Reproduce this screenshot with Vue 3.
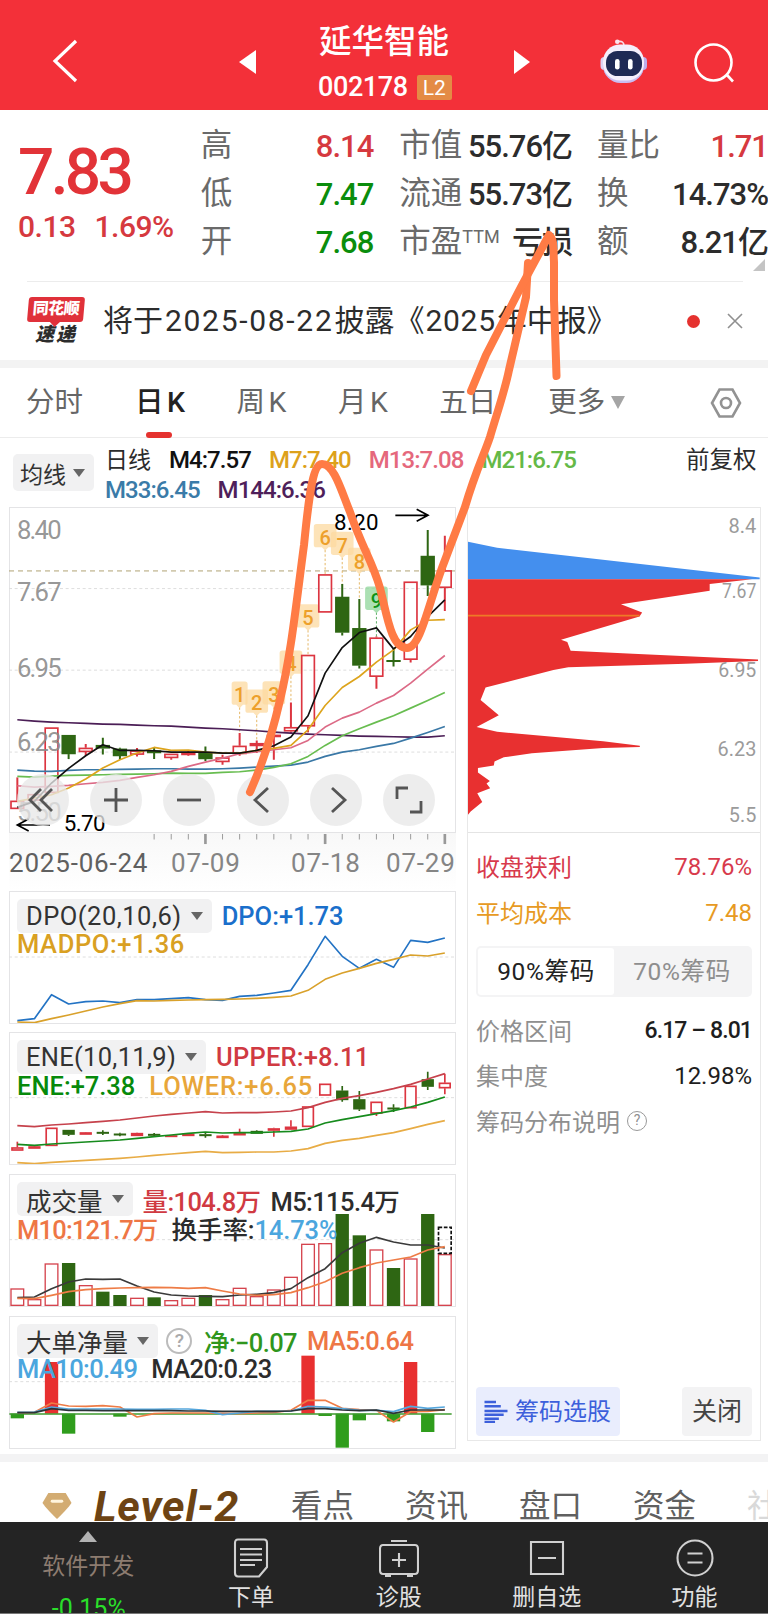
<template>
    <div class="page">
        <header class="header">
            <svg class="back" viewBox="0 0 28 44"><path d="M25 2 L4 22 L25 42" /></svg>
            <svg class="tri" viewBox="0 0 17 24"><path d="M17 0 V24 L0 12Z" /></svg>
            <div class="title">
                <h1>延华智能</h1>
                <div class="code">002178<span class="l2">L2</span></div>
            </div>
            <svg class="tri tri-right" viewBox="0 0 17 24"><path d="M0 0 V24 L16 12Z" /></svg>
            <svg class="robot" viewBox="0 0 48 46">
                <path d="M18 3.500 Q24 2.500 24 8" fill="none" stroke="#f9d9e6" stroke-width="1.600" />
                <circle cx="17.300" cy="3.700" r="2.300" fill="#fbe4ee" />
                <rect x="0.500" y="19" width="8" height="13" rx="4" fill="#dcd2f4" />
                <rect x="39" y="19" width="8" height="13" rx="4" fill="#bfaeea" />
                <rect x="3" y="8" width="41" height="37" rx="17.500" fill="#c9bdf2" />
                <rect x="3" y="6.500" width="41" height="36" rx="17" fill="#f4effc" />
                <rect x="6" y="13" width="36" height="25" rx="11.500" fill="#1f2a55" />
                <rect x="15" y="21" width="4.600" height="10.500" rx="2.300" fill="#fff" />
                <rect x="28" y="21" width="4.600" height="10.500" rx="2.300" fill="#fff" />
            </svg>
            <svg class="search" viewBox="0 0 44 44">
                <circle cx="20.500" cy="20.500" r="18" />
                <path d="M34 33 L40 39.500" />
            </svg>
        </header>

        <section class="quote">
            <div class="price">
                <div class="last">7.83</div>
                <div class="change"><span>0.13</span><span>1.69%</span></div>
            </div>
            <dl v-for="(col, c) in quoteCols" :key="c" :class="'col' + c">
                <div v-for="row in col" :key="row.label">
                    <dt>{{ row.label }}<sup v-if="row.sup">{{ row.sup }}</sup></dt>
                    <dd :class="row.cls">{{ row.value }}</dd>
                </div>
            </dl>
            <i class="corner"></i>
        </section>

        <section class="notice">
            <div class="brand"><b>同花顺</b><em>速递</em></div>
            <p>将于<span class="date">2025-08-22</span>披露《<span class="year">2025</span>年中报》</p>
            <i class="dot"></i>
            <svg class="close" viewBox="0 0 16 16"><path d="M1 1 L15 15 M15 1 L1 15" /></svg>
        </section>

        <nav class="tabs">
            <span>分时</span>
            <span class="k active">日K</span>
            <span class="k">周K</span>
            <span class="k">月K</span>
            <span>五日</span>
            <span class="more">更多<i></i></span>
            <svg viewBox="0 0 32 32">
                <path d="M9.500 2.500 H22.500 L30 16 L22.500 29.500 H9.500 L2 16Z" />
                <circle cx="16" cy="16" r="5" />
            </svg>
        </nav>

        <section class="averages">
            <span class="chip">均线<i></i></span>
            <div class="lines">
                <div>
                    <span class="cn">日线</span>
                    <span class="m4">M4:7.57</span>
                    <span class="m7">M7:7.40</span>
                    <span class="m13">M13:7.08</span>
                    <span class="m21">M21:6.75</span>
                </div>
                <div>
                    <span class="m33">M33:6.45</span>
                    <span class="m144">M144:6.36</span>
                </div>
            </div>
            <span class="adjust">前复权</span>
        </section>

        <main class="charts">
            <div class="left">
                <div class="panel main-chart">
                    <svg class="plot" viewBox="27 21 1341 976" preserveAspectRatio="none">
                        <path class="grid" d="M27 266H1368M27 511H1368M27 757H1368" />
                        <path d="M27 213H1368" stroke="#b0a273" stroke-width="3" stroke-dasharray="15 12" />
                        <g v-for="m in marks" :key="m.n">
                            <path :d="`M${px(m.i)} ${m.y + 78}V${m.to}`" :stroke="m.n === 9 ? '#5cae66' : '#e5b867'" stroke-width="3" stroke-dasharray="7 6" />
                            <path :d="bubble(m)" :fill="m.n === 9 ? '#8fd69a' : '#fcd9a0'" fill-opacity=".75" />
                            <text class="mark" :x="px(m.i)" :y="m.y + 63" :fill="m.n === 9 ? '#0d9417' : '#eda02b'">{{ m.n }}</text>
                        </g>
                        <g v-for="(c, i) in candles" :key="i">
                            <path :d="`M${px(i)} ${c[1]}V${c[2]}M${px(i)} ${c[3]}V${c[4]}`" :stroke="c[0] ? red : green" stroke-width="6" />
                            <rect :x="px(i) - 19" :y="c[2] + 2" width="38" :height="Math.max(c[3] - c[2] - 4, 1)" :fill="c[0] ? 'none' : green" :stroke="c[0] ? red : green" stroke-width="5" />
                        </g>
                        <g class="axis-text">
                            <text v-for="t in leftAxis" :key="t[0]" x="51" :y="t[1]" textLength="134">{{ t[0] }}</text>
                        </g>
                        <polyline v-for="l in maLines" :key="l.color" class="line" :points="toPoints(l.data)" :stroke="l.color" />
                        <g class="note">
                            <text x="1002" y="90" textLength="134">8.20</text>
                            <path d="M1186 46H1284M1250 28L1284 46L1250 64" />
                            <text x="191" y="994" textLength="126">5.70</text>
                            <path d="M150 976H52M86 958L52 976L86 994" />
                        </g>
                    </svg>
                    <div class="tools">
                        <button v-for="(d, i) in tools" :key="i"><svg viewBox="0 0 52 52"><path :d="d" /></svg></button>
                    </div>
                </div>
                <div class="dates">
                    <svg viewBox="27 0 1341 40" preserveAspectRatio="none">
                        <path v-for="i in 18" :key="i" :d="`M${px(i + 7)} 3V${(i + 7) % 7 === 4 ? 34 : 20}`" :stroke-width="(i + 7) % 7 === 4 ? 8 : 3" />
                    </svg>
                    <div class="date-row">
                        <span class="first">2025-06-24</span><span>07-09</span><span>07-18</span><span>07-29</span>
                    </div>
                </div>

                <div class="panel sub">
                    <svg class="plot" viewBox="27 17 1341 396" preserveAspectRatio="none">
                        <path class="grid" d="M27 215H1368" />
                        <polyline class="line" :points="toPoints(dpo)" stroke="#2373c4" />
                        <polyline class="line" :points="toPoints(madpo)" stroke="#d9a12b" />
                    </svg>
                    <div class="legend">
                        <span class="chip">DPO(20,10,6)<i></i></span><span class="c-blue">DPO:+1.73</span>
                    </div>
                    <div class="legend second"><span class="c-gold wider">MADPO:+1.36</span></div>
                </div>

                <div class="panel sub">
                    <svg class="plot" viewBox="27 443 1341 396" preserveAspectRatio="none">
                        <path class="grid" d="M27 640H1368" />
                        <g v-for="(c, i) in eneCandles" :key="i">
                            <path :d="`M${px(i)} ${c[1]}V${c[2]}M${px(i)} ${c[3]}V${c[4]}`" :stroke="c[0] ? red : green" stroke-width="5" />
                            <rect :x="px(i) - 16" :y="c[2] + 2" width="32" :height="Math.max(c[3] - c[2] - 4, 1)" :fill="c[0] ? '#fff' : green" :stroke="c[0] ? red : green" stroke-width="5" />
                        </g>
                        <polyline class="line" :points="toPoints(upper)" stroke="#c6424c" />
                        <polyline class="line" :points="toPoints(ene)" stroke="#168b1d" />
                        <polyline class="line" :points="toPoints(lower)" stroke="#e8ac45" />
                    </svg>
                    <div class="legend">
                        <span class="chip ene-chip">ENE(10,11,9)<i></i></span><span class="c-red wide">UPPER:+8.11</span>
                    </div>
                    <div class="legend second"><span class="c-green">ENE:+7.38</span><span class="c-amber widest">LOWER:+6.65</span></div>
                </div>

                <div class="panel sub">
                    <svg class="plot" viewBox="27 14 1341 396" preserveAspectRatio="none">
                        <path class="grid" d="M27 211H1368" />
                        <g v-for="(v, i) in volumes" :key="i">
                            <rect v-if="volGreen.includes(i)" :x="px(i) - 20" :y="v" width="40" :height="410 - v" :fill="green" />
                            <rect v-else :x="px(i) - 19" :y="v + 2" width="38" :height="406 - v" fill="#fff" stroke="#d5444e" stroke-width="4" />
                        </g>
                        <rect :x="px(25) - 19" y="174" width="38" height="78" fill="none" stroke="#111" stroke-width="5" stroke-dasharray="11 5" />
                        <polyline class="line" :points="toPoints(volM5)" stroke="#3a3a3a" />
                        <polyline class="line" :points="toPoints(volM10)" stroke="#ee7c46" />
                    </svg>
                    <div class="legend narrow">
                        <span class="chip">成交量<i></i></span><span class="c-red">量:104.8万</span><span class="c-dark">M5:115.4万</span>
                    </div>
                    <div class="legend second cjk"><span class="c-orange more-narrow">M10:121.7万</span><span class="c-dark">换手率:<span class="c-sky">14.73%</span></span></div>
                </div>

                <div class="panel sub">
                    <svg class="plot" viewBox="27 439 1341 396" preserveAspectRatio="none">
                        <path class="grid" d="M27 636H1368" />
                        <rect v-for="b in netBars" :key="b[0]" :x="px(b[0]) - 20" :y="Math.min(b[1], 732)" width="40" :height="Math.abs(b[1] - 732)" :fill="b[1] < 732 ? '#e83030' : '#2f9d1c'" />
                        <path d="M28 733H1355" stroke="#3c9a2c" stroke-width="5" />
                        <polyline class="line" :points="toPoints(netMa5)" stroke="#ee7c46" />
                        <polyline class="line" :points="toPoints(netMa10)" stroke="#55a6dc" />
                        <polyline class="line" :points="toPoints(netMa20)" stroke="#2b3438" />
                    </svg>
                    <div class="legend narrow">
                        <span class="chip">大单净量<i></i></span><span class="help">?</span><span class="c-leaf">净:−0.07</span><span class="c-orange">MA5:0.64</span>
                    </div>
                    <div class="legend second narrow"><span class="c-sky">MA10:0.49</span><span class="c-dark">MA20:0.23</span></div>
                </div>
            </div>

            <aside class="right">
                <svg class="dist" viewBox="22 21 882 976" preserveAspectRatio="none">
                    <path d="M22 123L110 141L903 230V236H22Z" fill="#448fee" />
                    <path :d="distPath" fill="#e83030" />
                    <path d="M22 345H540" stroke="#ee7a26" stroke-width="5" />
                    <text v-for="t in rightAxis" :key="t[0]" :x="893 - t[2]" :y="t[1]" :textLength="t[2]" lengthAdjust="spacingAndGlyphs">{{ t[0] }}</text>
                </svg>
                <div class="stats">
                    <div class="stat s-red"><span>收盘获利</span><b>78.76%</b></div>
                    <div class="stat s-gold"><span>平均成本</span><b>7.48</b></div>
                    <div class="segment"><span class="on">90%筹码</span><span>70%筹码</span></div>
                    <div class="stat"><span>价格区间</span><b class="range">6.17 – 8.01</b></div>
                    <div class="stat"><span>集中度</span><b>12.98%</b></div>
                    <div class="stat explain"><span>筹码分布说明</span><i>?</i></div>
                </div>
                <div class="actions">
                    <button class="pick">
                        <svg viewBox="0 0 24 24"><path d="M0 2H12M0 6.500H17M0 11.500H24M0 15.500H20M0 19.500H15M0 23H11" /></svg>筹码选股
                    </button>
                    <button class="shut">关闭</button>
                </div>
            </aside>
        </main>

        <nav class="subnav">
            <svg viewBox="0 0 30 28">
                <path d="M6 0H24L30 10Q29 13 15 27Q1 13 0 10Z" fill="#d3ac72" />
                <path d="M10 8.500H20" stroke="#fff5df" stroke-width="3" stroke-linecap="round" />
            </svg>
            <strong>Level-2</strong>
            <span>看点</span><span>资讯</span><span>盘口</span><span>资金</span><span class="fade">社</span>
        </nav>

        <footer class="toolbar">
            <div class="sector">
                <i></i>
                <span>软件开发</span>
                <b>-0.15%</b>
            </div>
            <div class="item">
                <svg viewBox="0 0 40 40"><path d="M7 1.500H33Q36 1.500 36 5V29L28 38.500H7Q4 38.500 4 35V5Q4 1.500 7 1.500Z M9 11H31M9 16.500H31M9 22H31M9 27H24" /></svg>
                <span>下单</span>
            </div>
            <div class="item">
                <svg viewBox="0 0 40 40"><path d="M4 7H36Q39 7 39 11V32Q39 36 36 36H4Q1 36 1 32V11Q1 7 4 7Z M12 3H28M20 15V29M13 22H27M6 38H12M28 38H34" /></svg>
                <span>诊股</span>
            </div>
            <div class="item">
                <svg viewBox="0 0 40 40"><path d="M4 4H36V36H4Z M11 20H29" /></svg>
                <span>删自选</span>
            </div>
            <div class="item">
                <svg viewBox="0 0 40 40"><circle cx="20" cy="20" r="17.500" /><path d="M12.500 15.500H27.500M12.500 24.500H27.500" /></svg>
                <span>功能</span>
            </div>
        </footer>

        <!-- 手绘走势标注 -->
        <svg class="sketch" viewBox="0 0 768 1615">
            <path d="M250 792C262 765 272 735 280 700C291 655 296 605 304 545C308 505 312 464 322 464C334 464 341 490 350 512C362 548 372 560 380 588C387 615 391 648 407 648C421 648 429 600 445 560L465 507C476 470 484 455 490 437C498 410 505 390 509 370C516 340 522 315 526 297L528 263" />
            <path d="M471 391L486 355L521 287L549 235C555 240 553 250 554 262V300L556.500 376" />
        </svg>
    </div>
</template>

<script setup>
const red = "#dc3540";
const green = "#2e6613";

const quoteCols = [
    [
        { label: "高", value: "8.14", cls: "up" },
        { label: "低", value: "7.47", cls: "down" },
        { label: "开", value: "7.68", cls: "down" },
    ],
    [
        { label: "市值", value: "55.76亿" },
        { label: "流通", value: "55.73亿" },
        { label: "市盈", sup: "TTM", value: "亏损" },
    ],
    [
        { label: "量比", value: "1.71", cls: "up" },
        { label: "换", value: "14.73%" },
        { label: "额", value: "8.21亿" },
    ],
];

const leftAxis = [["8.40", 117], ["7.67", 304], ["6.95", 531], ["6.23", 755], ["5.50", 963]];
const rightAxis = [["8.4", 95, 84], ["7.67", 293, 104], ["6.95", 530, 115], ["6.23", 768, 117], ["5.5", 966, 83]];

// [阳线, 最高, 实体上沿, 实体下沿, 最低]
const candles = [
    [1, 833, 903, 928, 928], [1, 883, 883, 903, 903], [1, 683, 683, 880, 880], [0, 706, 706, 763, 778],
    [1, 733, 744, 757, 768], [0, 714, 736, 746, 764], [0, 744, 747, 769, 780], [1, 745, 752, 765, 770],
    [0, 743, 752, 760, 778], [1, 762, 762, 775, 780], [1, 753, 757, 766, 768], [0, 740, 758, 778, 784],
    [1, 765, 773, 787, 795], [1, 700, 738, 763, 768], [1, 722, 730, 739, 760], [1, 700, 705, 712, 780],
    [1, 608, 682, 695, 700], [1, 465, 465, 680, 698], [1, 223, 223, 338, 338], [0, 252, 291, 398, 407],
    [0, 297, 385, 497, 506], [1, 410, 413, 531, 567], [0, 445, 481, 483, 500], [1, 245, 245, 480, 488],
    [0, 90, 168, 256, 288], [1, 107, 211, 264, 333],
];

const maLines = [
    { color: "#4b1e56", data: [660, 664, 667, 669, 671, 673, 674, 676, 678, 679, 682, 685, 687, 690, 693, 697, 700, 703, 705, 707, 709, 710, 711, 712, 712, 708] },
    { color: "#3a78a6", data: [811, 814, 815, 812, 810, 810, 809, 808, 807, 807, 808, 808, 807, 805, 802, 799, 796, 787, 770, 757, 750, 740, 731, 715, 698, 680] },
    { color: "#68bd50", data: [830, 832, 829, 827, 826, 825, 824, 823, 822, 820, 821, 821, 818, 816, 811, 803, 792, 770, 737, 708, 687, 667, 648, 625, 602, 578] },
    { color: "#dc6a86", data: [858, 862, 860, 857, 852, 848, 842, 833, 825, 815, 800, 787, 775, 762, 756, 750, 744, 722, 682, 655, 637, 610, 587, 550, 508, 467] },
    { color: "#dda41c", data: [905, 895, 885, 865, 838, 805, 780, 760, 743, 752, 751, 757, 760, 760, 752, 746, 737, 690, 617, 563, 530, 487, 450, 390, 361, 359] },
    { color: "#111", data: [923, 905, 850, 806, 768, 735, 752, 752, 753, 757, 757, 757, 760, 760, 752, 738, 712, 648, 520, 443, 398, 384, 447, 410, 350, 300] },
];

const marks = [
    { n: 1, i: 13, y: 545, to: 700 }, { n: 2, i: 14, y: 569, to: 722 }, { n: 3, i: 15, y: 544, to: 700 },
    { n: 4, i: 16, y: 452, to: 608 }, { n: 5, i: 17, y: 313, to: 465 }, { n: 6, i: 18, y: 72, to: 223 },
    { n: 7, i: 19, y: 95, to: 252 }, { n: 8, i: 20, y: 143, to: 297 }, { n: 9, i: 21, y: 260, to: 410 },
];

const tools = [
    "M24 15L13 26L24 37M35 15L24 26L35 37",
    "M26 14V38M14 26H38",
    "M14 26H38",
    "M31 14L18 26L31 38",
    "M22 14L35 26L22 38",
    "M14 25V14H25M27 38H38V27",
];

const dpo = [406, 400, 328, 356, 349, 347, 352, 343, 343, 340, 337, 343, 345, 333, 330, 323, 315, 238, 153, 213, 249, 222, 246, 165, 171, 158];
const madpo = [410, 412, 400, 389, 377, 365, 355, 346, 347, 345, 344, 343, 342, 341, 339, 336, 332, 315, 282, 263, 249, 234, 222, 209, 212, 203];

const upper = [724, 727, 722, 719, 715, 711, 707, 701, 695, 690, 686, 682, 686, 685, 685, 683, 680, 670, 654, 642, 634, 624, 613, 600, 584, 568];
const ene = [780, 783, 779, 776, 773, 770, 767, 762, 757, 752, 747, 743, 746, 745, 745, 743, 741, 734, 716, 706, 697, 688, 679, 668, 654, 638];
const lower = [835, 838, 834, 831, 828, 825, 822, 818, 813, 809, 805, 801, 805, 804, 803, 803, 800, 793, 777, 768, 762, 753, 745, 733, 720, 709];
const eneCandles = [
    [1, 772, 789, 799, 799], [1, 784, 786, 793, 793], [1, 730, 730, 785, 785], [0, 737, 737, 751, 755],
    [1, 743, 744, 751, 751], [0, 738, 743, 746, 752], [0, 745, 748, 752, 756], [1, 745, 746, 755, 755],
    [0, 746, 749, 752, 756], [1, 752, 753, 757, 757], [1, 747, 748, 755, 755], [0, 746, 750, 754, 760],
    [1, 752, 754, 761, 761], [1, 733, 746, 753, 753], [0, 738, 740, 748, 748], [1, 730, 732, 739, 757],
    [1, 708, 727, 736, 736], [1, 666, 666, 728, 728], [1, 598, 598, 634, 634], [0, 605, 619, 647, 652],
    [0, 620, 645, 675, 680], [1, 652, 652, 688, 695], [0, 660, 670, 673, 683], [1, 604, 604, 672, 672],
    [0, 562, 585, 607, 617], [1, 568, 595, 612, 630],
];

const volumes = [357, 389, 282, 281, 347, 367, 377, 385, 384, 392, 385, 377, 389, 355, 380, 360, 322, 223, 221, 134, 198, 240, 296, 267, 134, 254];
const volGreen = [3, 5, 6, 8, 11, 19, 20, 22, 24];
const volM5 = [385, 383, 358, 338, 329, 330, 329, 350, 368, 377, 380, 381, 382, 377, 375, 370, 358, 325, 298, 250, 222, 204, 218, 227, 227, 236];
const volM10 = [387, 388, 378, 367, 361, 358, 356, 355, 354, 355, 357, 355, 365, 374, 378, 376, 370, 355, 337, 312, 295, 281, 272, 263, 242, 232];

const netBars = [[0, 746], [2, 577], [3, 792], [6, 741], [17, 558], [18, 739], [19, 834], [20, 752], [22, 755], [23, 577], [24, 787]];
const netMa5 = [729, 728, 700, 709, 710, 708, 712, 742, 732, 730, 730, 730, 731, 732, 730, 728, 722, 692, 692, 716, 720, 722, 757, 726, 725, 720];
const netMa10 = [728, 727, 712, 718, 718, 718, 718, 719, 719, 718, 718, 722, 735, 730, 725, 725, 724, 710, 712, 717, 722, 722, 726, 710, 716, 712];
const netMa20 = [729, 729, 717, 722, 722, 723, 723, 723, 723, 723, 724, 724, 725, 725, 725, 725, 724, 717, 717, 721, 723, 721, 731, 721, 721, 721];

const distPath =
    "M22 236H880L752 250V270L484 311L548 336L540 348L303 418L322 425L332 451L520 460L898 477V482L680 490L325 501L280 509" +
    "L75 562L60 599L115 645L48 681L110 695L430 724L541 737V741L430 744L215 760L130 772L102 785L100 797L52 804V818" +
    "L88 843L78 851L89 865L50 880L65 907L30 935L22 945Z";

function px(i) {
    return Math.round((52 + 51.3 * i) * 10) / 10;
}

function toPoints(data) {
    return data.map((y, i) => `${px(i)},${y}`).join(" ");
}

// 蜡烛上方的数字气泡
function bubble(m) {
    const w = m.n === 1 ? 24 : 34;
    const x = px(m.i);
    return `M${x - w} ${m.y + 8}q0 -8 8 -8H${x + w - 8}q8 0 8 8V${m.y + 62}q0 8 -8 8H${x + 10}L${x} ${m.y + 80}L${x - 10} ${m.y + 70}H${x - w + 8}q-8 0 -8 -8Z`;
}
</script>

<style>
body {
    background: #fff;
}
</style>

<style scoped>
.page {
    position: relative;
    width: 768px;
    height: 1615px;
    overflow: hidden;
    background: #fff;
    color: #2c2c2c;
    font-family: Roboto, "Noto Sans CJK SC", sans-serif;
}
.page * {
    box-sizing: border-box;
}
button {
    border: 0;
    padding: 0;
    font: inherit;
}
svg {
    display: block;
    flex: none;
}

/* 顶部标题栏 */
.header {
    height: 110px;
    background: #f33039;
    color: #fff;
    display: flex;
    align-items: flex-start;
}
.back {
    width: 28px;
    height: 44px;
    margin: 39px 0 0 51px;
    fill: none;
    stroke: #fff;
    stroke-width: 3.2;
}
.tri {
    width: 17px;
    height: 24px;
    margin: 50px 0 0 160px;
    fill: #fff;
}
.tri-right {
    margin-left: 57px;
}
.title {
    width: 138px;
    margin: 23px 0 0 63px;
}
.title h1 {
    margin: 0;
    font-size: 32.500px;
    line-height: 38px;
    font-weight: 500;
}
.code {
    display: flex;
    align-items: center;
    height: 28px;
    margin: 12px 0 0 -1px;
    font-size: 27px;
    font-weight: 500;
    letter-spacing: -.4px;
    white-space: nowrap;
}
.l2 {
    width: 35px;
    height: 25px;
    margin-left: 9px;
    line-height: 26px;
    border-radius: 2px;
    background: #e48b45;
    font-size: 21px;
    font-weight: 400;
    letter-spacing: 0;
    text-align: center;
}
.robot {
    width: 48px;
    height: 46px;
    margin: 38px 0 0 69px;
}
.search {
    width: 44px;
    height: 44px;
    margin: 42px 0 0 45px;
    fill: none;
    stroke: #fff;
    stroke-width: 2.6;
}

/* 行情 */
.quote {
    position: relative;
    height: 172px;
    display: flex;
    padding-top: 12px;
}
.quote::after {
    content: "";
    position: absolute;
    left: 27px;
    right: 25px;
    bottom: 0;
    height: 1px;
    background: #ececec;
}
.price {
    width: 201px;
    padding-left: 18px;
    color: #e23338;
}
.last {
    height: 78px;
    margin-top: 12px;
    font-size: 64px;
    line-height: 78px;
    font-weight: 500;
    letter-spacing: -3.700px;
}
.change {
    display: flex;
    gap: 19px;
    font-size: 30px;
    font-weight: 500;
    line-height: 29px;
    letter-spacing: -.5px;
    color: #d6393f;
}
dl {
    margin: 0;
}
dl > div {
    display: flex;
    justify-content: space-between;
    height: 48px;
    line-height: 48px;
}
dt {
    font-size: 31.500px;
    color: #6a6a6a;
    white-space: nowrap;
}
dt sup {
    font-size: 18px;
    line-height: 0;
    vertical-align: 9px;
}
dd {
    margin: 1px 0 0;
    font-size: 31px;
    font-weight: 500;
    letter-spacing: -1px;
    white-space: nowrap;
}
.up {
    color: #d6393f;
}
.down {
    color: #0a8d0c;
}
.col0 {
    width: 173px;
}
.col1 {
    width: 172px;
    margin-left: 26px;
}
.col2 {
    width: 171px;
    margin-left: 26px;
    flex: none;
}
.col1 dd {
    margin-right: -1px;
}
.corner {
    position: absolute;
    right: 3px;
    bottom: 11px;
    border-left: 12px solid transparent;
    border-bottom: 12px solid #c4c4c4;
}

/* 公告提醒 */
.notice {
    height: 86px;
    border-bottom: 8px solid #f3f3f3;
    display: flex;
    align-items: center;
}
.brand {
    width: 56px;
    margin-left: 28px;
    text-align: center;
    line-height: 1;
}
.brand b {
    position: relative;
    display: block;
    height: 25px;
    line-height: 24px;
    border-radius: 3px;
    background: #e0313a;
    color: #fff;
    font-size: 16px;
    font-weight: 900;
    letter-spacing: -.5px;
    transform: skewX(-5deg);
}
.brand b::after {
    content: "";
    position: absolute;
    left: 23px;
    top: 25px;
    border: 5px solid transparent;
    border-top-color: #e0313a;
    border-bottom: 0;
}
.brand em {
    display: block;
    margin-top: 3px;
    font-size: 19px;
    line-height: 20px;
    font-weight: 900;
    letter-spacing: 2px;
}
.notice p {
    width: 584px;
    margin: -7px 0 0 19px;
    font-size: 30px;
    white-space: nowrap;
}
.date {
    margin: 0 1px 0 2px;
    letter-spacing: 1.700px;
}
.year {
    margin: 0 1px 0 1px;
    letter-spacing: .7px;
}
.dot {
    width: 13px;
    height: 13px;
    border-radius: 50%;
    background: #e5322f;
}
.close {
    width: 16px;
    height: 16px;
    margin-left: 27px;
    stroke: #8f8f8f;
    stroke-width: 1.6;
}

/* 周期切换 */
.tabs {
    height: 70px;
    padding-left: 26px;
    border-bottom: 1px solid #ececec;
    display: flex;
    align-items: center;
    font-size: 28.500px;
    color: #666;
}
.tabs span {
    position: relative;
    margin-right: 52px;
    line-height: 74px;
    white-space: nowrap;
}
.tabs .k {
    margin-right: 48px;
    letter-spacing: 3.500px;
}
.tabs .active {
    color: #222;
    font-weight: 500;
}
.tabs .active::after {
    content: "";
    position: absolute;
    left: 11px;
    bottom: 2px;
    width: 26px;
    height: 6px;
    border-radius: 3px;
    background: #e5322f;
}
.tabs .more {
    display: flex;
    align-items: center;
    margin-right: 85px;
}
.more i {
    margin-left: 6px;
    border: 7px solid transparent;
    border-top: 13px solid #a5a5a5;
    border-bottom: 0;
}
.tabs svg {
    width: 32px;
    height: 32px;
    fill: none;
    stroke: #929292;
    stroke-width: 2.600;
}

/* 均线数值 */
.averages {
    height: 69px;
    display: flex;
    padding-left: 13px;
    font-size: 24px;
}
.chip {
    display: flex;
    align-items: center;
    height: 34px;
    padding: 0 9px;
    border-radius: 5px;
    background: #f1f1f2;
    color: #333;
}
.chip i {
    margin-left: 9px;
    border: 6px solid transparent;
    border-top: 8px solid #666;
    border-bottom: 0;
}
.averages .chip {
    flex: none;
    width: 81px;
    height: 37px;
    margin-top: 16px;
    padding: 0 7px;
    font-size: 23px;
}
.averages .chip i {
    margin-left: 7px;
}
.lines {
    width: 592px;
    padding: 7px 0 0 11px;
    font-weight: 500;
    letter-spacing: -.95px;
}
.lines div {
    display: flex;
    gap: 18px;
    height: 30px;
    line-height: 31px;
    white-space: nowrap;
}
.cn {
    font-size: 23px;
    font-weight: 400;
    letter-spacing: 0;
}
.m4 { color: #111; }
.m7 { color: #dda11b; }
.m13 { color: #e5687c; }
.m21 { color: #65b947; }
.m33 { color: #3a7ba8; }
.m144 { color: #4f1f5a; }
.adjust {
    margin-top: 7px;
    line-height: 30px;
    font-size: 23.500px;
    white-space: nowrap;
}

/* 图表区 */
.charts {
    display: flex;
    gap: 11px;
    height: 947px;
    padding-left: 9px;
}
.left {
    width: 447px;
}
.panel {
    position: relative;
    border: 1px solid #e4e4e6;
}
.plot {
    position: absolute;
    left: -1px;
    top: -1px;
    width: 447px;
    fill: none;
}
.main-chart {
    height: 326px;
}
.main-chart .plot {
    height: 325px;
}
.grid {
    stroke: #dedede;
    stroke-width: 3;
    stroke-dasharray: 9 8;
}
.line {
    fill: none;
    stroke-width: 5;
    stroke-linejoin: round;
}
.axis-text {
    font-size: 77px;
    fill: #8a8a8a;
    fill-opacity: .9;
}
.mark {
    font-size: 60px;
    font-weight: 500;
    text-anchor: middle;
}
.note text {
    font-size: 67px;
    fill: #000;
}
.note path {
    stroke: #000;
    stroke-width: 5;
}
.tools {
    position: absolute;
    left: 6.500px;
    bottom: 6px;
    display: flex;
    gap: 21.400px;
}
.tools button {
    width: 52px;
    height: 52px;
    border-radius: 50%;
    background: rgba(232, 232, 232, .78);
}
.tools svg {
    width: 52px;
    height: 52px;
    fill: none;
    stroke: #555;
    stroke-width: 2.800;
}
.dates {
    height: 57.500px;
    background: linear-gradient(#f8f8f8, #fff);
}
.dates svg {
    width: 447px;
    height: 13px;
    stroke: #999;
}
.date-row {
    display: flex;
    font-size: 26px;
    letter-spacing: .8px;
    line-height: 35px;
    color: #858585;
    white-space: nowrap;
}
.date-row span {
    flex: none;
    width: 95px;
}
.date-row .first {
    width: 162px;
    color: #606060;
}
.date-row span:nth-child(2) {
    width: 120px;
}
.date-row span:last-child {
    width: 70px;
}

.sub {
    height: 133px;
    margin-bottom: 8.800px;
    padding: 7px 0 0 7px;
    font-size: 25.500px;
}
.sub .plot {
    height: 132px;
}
.legend {
    position: relative;
    display: flex;
    align-items: center;
    gap: 10px;
    height: 34px;
    white-space: nowrap;
    font-weight: 500;
}
.legend .chip {
    font-weight: 400;
    letter-spacing: .5px;
}
.legend .ene-chip {
    letter-spacing: .3px;
}
.legend.second {
    height: 23px;
    gap: 14px;
}
.narrow { letter-spacing: -.6px; }
.more-narrow { letter-spacing: -.8px; }
.cjk { letter-spacing: -.1px; }
.wide { letter-spacing: .2px; }
.wider { letter-spacing: .6px; }
.widest { letter-spacing: .8px; }
.narrow .chip { letter-spacing: 0; }
.c-blue { color: #1a6fcb; }
.c-gold { color: #d9a022; }
.c-red { color: #d03a42; }
.c-green { color: #078a0b; }
.c-amber { color: #e8a63a; }
.c-dark { color: #2c2c2c; }
.c-orange { color: #ee7645; }
.c-sky { color: #4ba6de; }
.c-leaf { color: #2f961d; }
.help {
    width: 26px;
    height: 26px;
    margin: 0 2px 0 -2px;
    border: 2px solid #bcbcbc;
    border-radius: 50%;
    color: #aaa;
    font-size: 19px;
    line-height: 22px;
    text-align: center;
}

/* 筹码分布 */
.right {
    width: 294px;
    height: 934px;
    border: 1px solid #e8e8e8;
    display: flex;
    flex-direction: column;
}
.dist {
    width: 292px;
    height: 325px;
    border-bottom: 1px solid #e4e4e4;
}
.dist text {
    font-size: 61px;
    fill: #9b9b9b;
}
.stats {
    padding: 10px 8px 0 8px;
}
.stat {
    display: flex;
    justify-content: space-between;
    align-items: center;
    height: 45.700px;
    font-size: 24px;
    color: #8f8f8f;
}
.stat b {
    padding-top: 2px;
    font-weight: 400;
    color: #1e1e1e;
}
.stat .range {
    font-size: 23px;
    font-weight: 500;
    letter-spacing: -.9px;
}
.s-red span, .s-red b { color: #d83a4c; }
.s-gold span, .s-gold b { color: #e79a23; }
.segment {
    display: flex;
    height: 51px;
    margin: 12px 0 9px;
    padding: 2px;
    border-radius: 5px;
    background: #f4f4f5;
    font-size: 24.500px;
    line-height: 47px;
    letter-spacing: .6px;
    color: #8e8e8e;
    text-align: center;
}
.segment span {
    width: 50%;
}
.segment .on {
    border-radius: 3px;
    background: #fff;
    color: #222;
}
.explain {
    justify-content: flex-start;
}
.explain i {
    width: 20px;
    height: 20px;
    margin-left: 7px;
    border: 1.500px solid #999;
    border-radius: 50%;
    font-size: 14px;
    line-height: 17px;
    font-style: normal;
    text-align: center;
}
.actions {
    display: flex;
    justify-content: space-between;
    margin: auto 8px 4px;
}
.actions button {
    height: 49px;
    border-radius: 4px;
    font-size: 24px;
    line-height: 46px;
}
.actions .pick {
    display: flex;
    align-items: center;
    gap: 7px;
    width: 144px;
    padding-left: 8px;
    background: #e9edfd;
    color: #3c5fdb;
    white-space: nowrap;
}
.pick svg {
    width: 24px;
    height: 23px;
    stroke: #3c5fdb;
    stroke-width: 2.600;
}
.actions .shut {
    width: 70px;
    background: #f3f3f4;
    color: #444;
    font-size: 25px;
}

/* 下方标签 */
.subnav {
    height: 68px;
    border-top: 8px solid #f3f3f4;
    padding: 30px 0 0 42px;
    display: flex;
    align-items: center;
    font-size: 31.500px;
    line-height: 30px;
    color: #606060;
    overflow: hidden;
}
.subnav svg {
    width: 30px;
    height: 27px;
    margin-top: -2px;
}
.subnav strong {
    flex: none;
    width: 219px;
    padding-left: 22px;
    font-size: 43px;
    line-height: 26px;
    margin-top: -3px;
    font-style: italic;
    letter-spacing: .8px;
    color: #6d4313;
}
.subnav span {
    width: 114px;
    flex: none;
}
.subnav .fade {
    color: #d9d9d9;
}

/* 底部操作栏 */
.toolbar {
    height: 92px;
    border-bottom: 1px solid #777;
    background: #242424;
    display: flex;
    color: #e1e1e1;
    overflow: hidden;
    font-size: 23px;
}
.sector {
    width: 177px;
    display: flex;
    flex-direction: column;
    align-items: center;
    color: #8d7c70;
}
.sector i {
    margin-top: 9px;
    border: 9px solid transparent;
    border-bottom: 11px solid #b3b3b3;
    border-top: 0;
}
.sector span {
    margin-top: 9px;
    line-height: 32px;
}
.sector b {
    margin-top: 8px;
    padding-left: 1px;
    line-height: 36px;
    font-size: 25px;
    font-weight: 400;
    color: #2ade2a;
}
.item {
    width: 148.300px;
    padding-left: 1px;
    display: flex;
    flex-direction: column;
    align-items: center;
}
.item svg {
    width: 40px;
    height: 40px;
    margin-top: 16px;
    fill: none;
    stroke: #d0d0d0;
    stroke-width: 2.100;
}
.item span {
    margin-top: 3px;
    line-height: 33px;
}

.sketch {
    position: absolute;
    left: 0;
    top: 0;
    width: 768px;
    height: 1615px;
    pointer-events: none;
    fill: none;
    stroke: #ff7b45;
    stroke-width: 8;
    stroke-linecap: round;
    stroke-linejoin: round;
}
</style>
